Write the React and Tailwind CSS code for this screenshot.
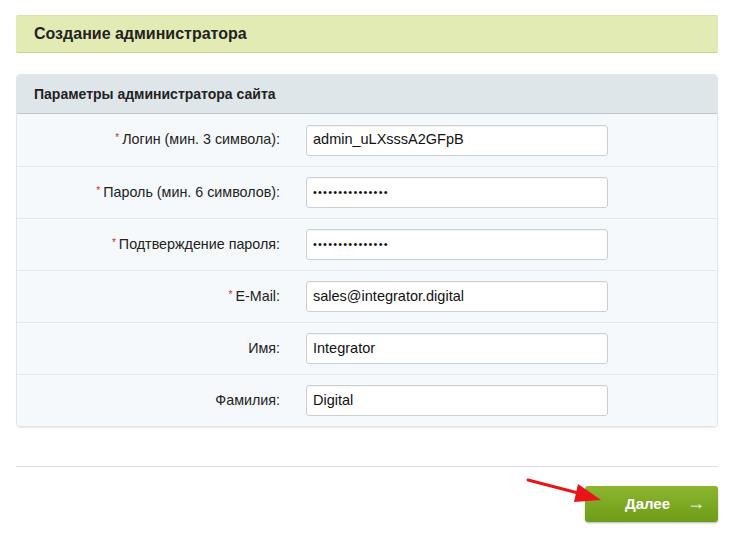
import React from "react";

const rows = [
  { label: "Логин (мин. 3 символа):", req: true, value: "admin_uLXsssA2GFpB" },
  { label: "Пароль (мин. 6 символов):", req: true, value: "•••••••••••••••", pw: true },
  { label: "Подтверждение пароля:", req: true, value: "•••••••••••••••", pw: true },
  { label: "E-Mail:", req: true, value: "sales@integrator.digital" },
  { label: "Имя:", req: false, value: "Integrator" },
  { label: "Фамилия:", req: false, value: "Digital" },
];

export default function App() {
  return (
    <div
      className="w-[740px] h-[538px] bg-white relative overflow-hidden text-[#222]"
      style={{ fontFamily: '"Liberation Sans", Arial, sans-serif' }}
    >
      <div className="pt-[15px] px-[16px] w-[734px]">
        <div className="h-[38px] bg-[#e2ebb4] border-t border-[#d9e2a6] border-b border-b-[#c8d38c] rounded-[2px] flex items-center pl-[18px]">
          <span className="font-bold text-[16px] text-[#222]">Создание администратора</span>
        </div>

        <div className="mt-[21px] border border-[#dfe5e8] rounded-[4px] overflow-hidden shadow-[0_1px_1px_rgba(0,0,0,0.08)]">
          <div className="h-[39px] bg-[#dfe6ea] border-b border-[#bcc6cc] flex items-center pl-[17px]">
            <span className="font-bold text-[14px] text-[#222]">Параметры администратора сайта</span>
          </div>
          {rows.map((r, i) => (
            <div
              key={i}
              className={`h-[52px] bg-[#f5f9fb] flex items-center ${i > 0 ? "border-t border-[#e3e9ec]" : ""}`}
            >
              <div className="w-[263px] text-right text-[14.3px] text-[#222]">
                {r.req && <span className="text-[#d2232a] text-[10px] align-top mr-[3px] relative top-[1px]">*</span>}
                {r.label}
              </div>
              <div className="ml-[26px] w-[302px] h-[31px] bg-white border border-[#c9cfd3] rounded-[3px] flex items-center pl-[6px] shadow-[inset_0_1px_1px_rgba(0,0,0,0.04)]">
                {r.pw ? (
                  <span className="text-[11px] tracking-[1.2px] text-[#111]">{r.value}</span>
                ) : (
                  <span className="text-[14.5px] text-[#111]">{r.value}</span>
                )}
              </div>
            </div>
          ))}
        </div>

        <div className="mt-[39px] border-t border-[#dcdfe1]" />

        <div className="flex justify-end mt-[19px]">
          <div className="w-[133px] h-[36px] rounded-[3px] bg-gradient-to-b from-[#8db62e] to-[#6d9c16] shadow-[0_1px_2px_rgba(0,0,0,0.3)] flex items-center pl-[40px] pr-[13px] justify-between text-white">
            <span className="font-bold text-[15px]">Далее</span>
            <span className="text-[18px] font-bold leading-none -mt-[3px]">→</span>
          </div>
        </div>
      </div>

      <svg className="absolute left-0 top-0 pointer-events-none" width="740" height="538">
        <line x1="528" y1="480" x2="582" y2="494" stroke="#e8141a" strokeWidth="3" strokeLinecap="round" />
        <polygon points="601,500 578,484 574,502" fill="#e8141a" />
      </svg>
    </div>
  );
}
